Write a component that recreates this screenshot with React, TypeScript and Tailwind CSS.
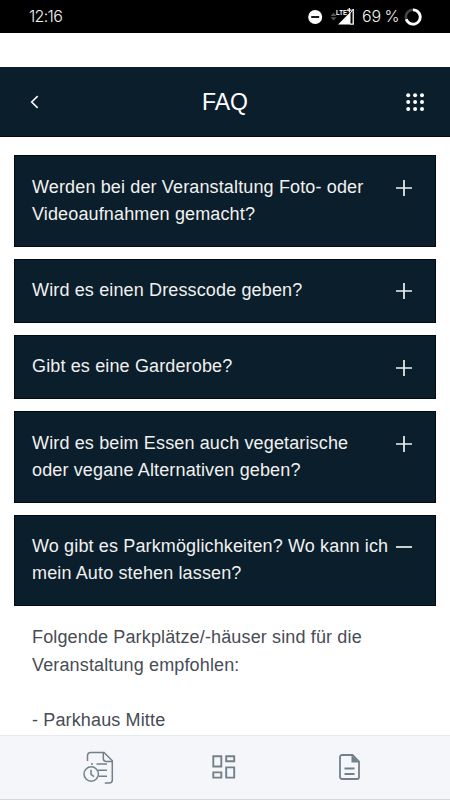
import { useState } from "react";

const faqs = [
  { lines: ["Werden bei der Veranstaltung Foto- oder", "Videoaufnahmen gemacht?"] },
  { lines: ["Wird es einen Dresscode geben?"] },
  { lines: ["Gibt es eine Garderobe?"] },
  { lines: ["Wird es beim Essen auch vegetarische", "oder vegane Alternativen geben?"] },
  {
    lines: ["Wo gibt es Parkmöglichkeiten? Wo kann ich", "mein Auto stehen lassen?"],
    answer: ["Folgende Parkplätze/-häuser sind für die", "Veranstaltung empfohlen:", "", "- Parkhaus Mitte"],
  },
];

function StatusBar() {
  return (
    <div className="flex h-[33px] shrink-0 items-center bg-black pr-[28px] pl-[29px] font-['Inter',sans-serif] font-light text-[#f2f2f2]">
      <span className="text-[16px] leading-[33px] tracking-[-0.7px]">12:16</span>
      <svg className="ml-auto" width="47" height="33" viewBox="0 0 47 33">
        <circle cx="7.2" cy="17" r="7" fill="#fff" />
        <path d="M3.2 17h8" stroke="#000" strokeWidth="1.8" />
        <path d="M22.5 16l3-3.2 3 3.2zM22.5 17.3l3 3.2 3-3.2z" fill="#555" />
        <path d="M30 24.5L42.5 12v12.5z" fill="#fff" />
        <path d="M45.2 9v15.1H42" stroke="#fff" strokeWidth="1.3" fill="none" />
        <path d="M41 14.5L45.5 9" stroke="#fff" strokeWidth="1" />
        <text x="28" y="15" fill="#fff" fontFamily="Liberation Sans" fontWeight="700" fontSize="8" textLength="11" lengthAdjust="spacingAndGlyphs">LTE</text>
        <path d="M39 10.2h4.6M41.3 8v4.6" stroke="#fff" strokeWidth="1.2" />
      </svg>
      <span className="ml-[7px] w-[38px] text-[16px] leading-[33px] tracking-[-0.1px] whitespace-nowrap [word-spacing:-1px]">69 %</span>
      <svg className="ml-[4px]" width="18" height="18" viewBox="0 0 18 18">
        <circle cx="9" cy="9" r="7.2" fill="none" stroke="#444" strokeWidth="2.6" />
        <path d="M9 1.8a7.2 7.2 0 1 1-6.8 9.5" fill="none" stroke="#fff" strokeWidth="2.8" />
      </svg>
    </div>
  );
}

function Header() {
  return (
    <header className="mt-[34px] grid h-[70px] shrink-0 grid-cols-[1fr_auto_1fr] items-center border-b border-[#010b13] bg-[#0b1e2c] pr-[25px] pl-[25px] text-white">
      <svg className="ml-[5px]" width="10" height="14" viewBox="0 0 10 14" fill="none" stroke="currentColor" strokeWidth="1.6">
        <path d="M7.7 1.2L1.7 7l6 5.8" />
      </svg>
      <h1 className="text-[23px] leading-[30px]">FAQ</h1>
      <svg className="justify-self-end" width="19" height="18" viewBox="0 0 19 18" fill="currentColor">
        {[2.2, 9.1, 16].map((y) =>
          [2.2, 9.1, 16].map((x) => <circle key={`${x}-${y}`} cx={x} cy={y} r="2" />)
        )}
      </svg>
    </header>
  );
}

function Nav() {
  return (
    <nav className="flex h-[64px] shrink-0 border-t border-[#e8ebed] bg-[#f4f6fa] text-[#73808a]">
      <button className="flex w-[198px] justify-center pt-[15px]">
        <svg width="32" height="34" viewBox="0 0 32 34" fill="none" stroke="currentColor" strokeWidth="1.5">
          <path d="M4.5 10V4.5a3 3 0 0 1 3-3h13.5l8.3 8.3V29a3 3 0 0 1-3 3h-4.5" />
          <path d="M20.3 1.5v6a3 3 0 0 0 3 3h6" />
          <circle cx="8.2" cy="23" r="7.2" />
          <path d="M8 18.8v4.5l3 2.3M13.5 13h10.5M8 13h2M15 19.3h9M15.8 25.3h8.2" />
        </svg>
      </button>
      <button className="flex w-[51px] justify-center pt-[19px]">
        <svg width="24" height="24" viewBox="0 0 24 24" fill="none" stroke="currentColor" strokeWidth="1.9">
          <path d="M1.3 1.3h8v10.2h-8zM14.2 1.3h8v5h-8zM14.2 12.4h8v10.2h-8zM1.3 17.4h8v5.2h-8z" />
        </svg>
      </button>
      <button className="flex w-[201px] justify-center pt-[17px]">
        <svg width="22" height="28" viewBox="0 0 22 28" fill="none" stroke="currentColor" strokeWidth="1.8">
          <path d="M3 2h10.5L20 8.5V24a2 2 0 0 1-2 2H3a2 2 0 0 1-2-2V4a2 2 0 0 1 2-2z" />
          <path d="M12.5 2v7.5H20z" fill="currentColor" stroke="none" />
          <path d="M5.5 15.5h10M5.5 21h10" />
        </svg>
      </button>
    </nav>
  );
}

export default function App() {
  const [open, setOpen] = useState(4);

  return (
    <div className="flex h-[800px] w-[450px] flex-col overflow-hidden bg-white font-['Liberation_Sans',Arial,sans-serif]">
      <StatusBar />
      <Header />
      <main className="flex min-h-0 flex-1 flex-col gap-[12.1px] overflow-hidden px-[14px] pt-[18.3px]">
        {faqs.map((faq, i) => (
          <section key={i} className="shrink-0">
            <button
              onClick={() => setOpen(open === i ? -1 : i)}
              className="flex w-full border border-[#010b13] bg-[#0b1e2c] pt-[17.3px] pr-[23px] pb-[17.7px] pl-[17px] text-left text-[18px] leading-[27.2px] tracking-[0.14px] text-[#f1f1ef]"
            >
              <span className="flex-1 whitespace-nowrap">
                {faq.lines.map((line) => (
                  <span key={line} className="block">{line}</span>
                ))}
              </span>
              <svg className="mt-[6.2px] shrink-0" width="16" height="16" viewBox="0 0 16 16" stroke="currentColor" strokeWidth="1.7">
                <path d={open === i ? "M0 8h16" : "M0 8h16M8 0v16"} />
              </svg>
            </button>
            {open === i && faq.answer && (
              <div className="pt-[18px] pl-[18px] text-[18px] leading-[27.6px] tracking-[0.14px] text-[#474c55]">
                {faq.answer.map((line, n) => (
                  <p key={n} className="min-h-[27.6px]">{line}</p>
                ))}
              </div>
            )}
          </section>
        ))}
      </main>
      <Nav />
      <div className="h-px shrink-0 bg-[#d5d8dd]" />
    </div>
  );
}
